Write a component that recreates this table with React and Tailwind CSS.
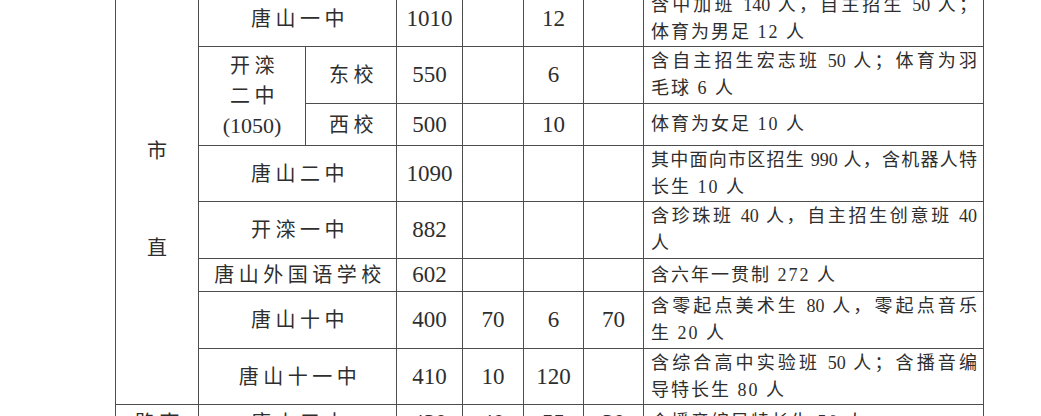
import React from 'react';

const cell = 'border border-[#4d4d4d] text-center align-middle p-0';
const name = 'text-[20px] leading-[30px] tracking-[4.5px] pl-[5px]';
const num = 'text-[23px] leading-[28px]';
const note = 'border border-[#4d4d4d] align-middle text-left pl-[7px] pr-[6px] text-[18px] leading-[27px]';

function Note({ first, second }) {
  return (
    <td className={note}>
      <div className={second ? 'whitespace-nowrap [text-align-last:justify]' : 'whitespace-nowrap tracking-[2px]'}>{first}</div>
      {second && <div className="whitespace-nowrap tracking-[2px]">{second}</div>}
    </td>
  );
}

const rows = [
  { h: 'h-[56px]', school: '唐山一中', total: '1010', a: '', b: '12', c: '', first: '含中加班 140 人，自主招生 50 人；', second: '体育为男足 12 人' },
  { h: 'h-[57px]', split: 'east' },
  { h: 'h-[42px]', split: 'west' },
  { h: 'h-[56px]', school: '唐山二中', total: '1090', a: '', b: '', c: '', first: '其中面向市区招生 990 人，含机器人特', second: '长生 10 人' },
  { h: 'h-[57px]', school: '开滦一中', total: '882', a: '', b: '', c: '', first: '含珍珠班 40 人，自主招生创意班 40', second: '人' },
  { h: 'h-[33px]', school: '唐山外国语学校', total: '602', a: '', b: '', c: '', first: '含六年一贯制 272 人' },
  { h: 'h-[57px]', school: '唐山十中', total: '400', a: '70', b: '6', c: '70', first: '含零起点美术生 80 人，零起点音乐', second: '生 20 人' },
  { h: 'h-[56px]', school: '唐山十一中', total: '410', a: '10', b: '120', c: '', first: '含综合高中实验班 50 人；含播音编', second: '导特长生 80 人' },
];

export default function App() {
  return (
    <div className="h-[416px] w-[1041px] overflow-hidden bg-white text-[#2e2e2e] font-['Liberation_Serif','Noto_Sans_CJK_SC',serif]">
      <div className="pl-[115px] -mt-[10px]">
        <table className="table-fixed border-collapse w-[868px]">
          <colgroup>
            <col className="w-[83px]" />
            <col className="w-[107px]" />
            <col className="w-[91px]" />
            <col className="w-[66px]" />
            <col className="w-[61px]" />
            <col className="w-[60px]" />
            <col className="w-[60px]" />
            <col className="w-[340px]" />
          </colgroup>
          <tbody>
            {rows.map((r, i) => {
              if (r.split === 'east') {
                return (
                  <tr key={i} className={r.h}>
                    <td rowSpan={2} className={cell}>
                      <div className={name}>开滦</div>
                      <div className={name}>二中</div>
                      <div className="text-[22px] leading-[30px]">(1050)</div>
                    </td>
                    <td className={cell}><span className={name}>东校</span></td>
                    <td className={cell}><span className={num}>550</span></td>
                    <td className={cell}></td>
                    <td className={cell}><span className={num}>6</span></td>
                    <td className={cell}></td>
                    <Note first="含自主招生宏志班 50 人；体育为羽" second="毛球 6 人" />
                  </tr>
                );
              }
              if (r.split === 'west') {
                return (
                  <tr key={i} className={r.h}>
                    <td className={cell}><span className={name}>西校</span></td>
                    <td className={cell}><span className={num}>500</span></td>
                    <td className={cell}></td>
                    <td className={cell}><span className={num}>10</span></td>
                    <td className={cell}></td>
                    <Note first="体育为女足 10 人" />
                  </tr>
                );
              }
              return (
                <tr key={i} className={r.h}>
                  {i === 0 && (
                    <td rowSpan={8} className={cell}>
                      <div className="flex flex-col items-center gap-[77px] text-[20px] leading-[20px] pt-[4px]">
                        <span>市</span>
                        <span>直</span>
                      </div>
                    </td>
                  )}
                  <td colSpan={2} className={cell}><span className={name}>{r.school}</span></td>
                  <td className={cell}><span className={num}>{r.total}</span></td>
                  <td className={cell}><span className={num}>{r.a}</span></td>
                  <td className={cell}><span className={num}>{r.b}</span></td>
                  <td className={cell}><span className={num}>{r.c}</span></td>
                  <Note first={r.first} second={r.second} />
                </tr>
              );
            })}
            <tr className="h-[36px]">
              <td className={cell}><span className={name}>路南</span></td>
              <td colSpan={2} className={cell}><span className={name}>唐山五中</span></td>
              <td className={cell}><span className={num}>430</span></td>
              <td className={cell}><span className={num}>40</span></td>
              <td className={cell}><span className={num}>55</span></td>
              <td className={cell}><span className={num}>30</span></td>
              <Note first="含播音编导特长生 50 人" />
            </tr>
          </tbody>
        </table>
      </div>
    </div>
  );
}
